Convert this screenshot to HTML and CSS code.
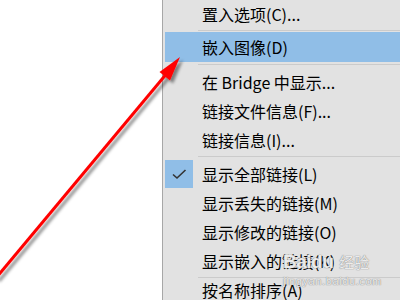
FILE: index.html
```html
<!DOCTYPE html>
<html>
<head>
<meta charset="utf-8">
<link rel="stylesheet" href="styles.css">
</head>
<body>
<div class="page">
  <div class="canvas"></div>
  <div class="menu">
    <div class="item first"><span class="check"></span><span class="label">置入选项(C)...</span></div>
    <div class="sep"></div>
    <div class="item active"><span class="check"></span><span class="label">嵌入图像(D)</span></div>
    <div class="sep"></div>
    <div class="item"><span class="check"></span><span class="label">在 Bridge 中显示...</span></div>
    <div class="item"><span class="check"></span><span class="label">链接文件信息(F)...</span></div>
    <div class="item"><span class="check"></span><span class="label">链接信息(I)...</span></div>
    <div class="sep"></div>
    <div class="item"><span class="check on"><svg width="28" height="28" viewBox="0 0 28 28"><path d="M8 14.5 L12 18 L20.5 10" fill="none" stroke="#333" stroke-width="1.6"/></svg></span><span class="label">显示全部链接(L)</span></div>
    <div class="item"><span class="check"></span><span class="label">显示丢失的链接(M)</span></div>
    <div class="item"><span class="check"></span><span class="label">显示修改的链接(O)</span></div>
    <div class="item"><span class="check"></span><span class="label">显示嵌入的链接(K)</span></div>
    <div class="sep"></div>
    <div class="item last"><span class="check"></span><span class="label">按名称排序(A)</span></div>
  </div>
  <svg class="arrow" width="400" height="300" viewBox="0 0 400 300">
    <defs>
      <filter id="sh" x="-20%" y="-20%" width="140%" height="140%">
        <feDropShadow dx="3" dy="3" stdDeviation="1.6" flood-color="#000" flood-opacity="0.45"/>
      </filter>
    </defs>
    <g filter="url(#sh)">
      <line x1="-4" y1="278" x2="168" y2="72" stroke="#ff0000" stroke-width="3"/>
      <polygon points="180,57 159.5,72 170,80.5" fill="#ff0000"/>
    </g>
  </svg>
  <div class="watermark">
    <div class="wm-top"><span class="wm-baidu">Bai<span class="paw">du</span></span><span class="wm-jy">经验</span></div>
    <div class="wm-url">jingyan.baidu.com</div>
  </div>
</div>
</body>
</html>
```
FILE: styles.css
```css
html, body {
  margin: 0;
  padding: 0;
  background: #ffffff;
}
.page {
  position: relative;
  width: 400px;
  height: 300px;
  overflow: hidden;
  display: flex;
  font-family: "Noto Sans CJK SC", "Noto Sans", sans-serif;
}
.canvas {
  width: 162px;
  flex: none;
  background: #ffffff;
}
.menu {
  flex: 1;
  background: #e2e2e2;
  border-left: 1px solid #a7a7a7;
  margin-top: -1px;
  display: flex;
  flex-direction: column;
}
.item {
  height: 29px;
  flex: none;
  display: flex;
  align-items: center;
  margin-left: 2px;
  font-size: 16px;
  color: #000;
  white-space: nowrap;
}
.item.active {
  background: #90bee7;
  height: 30px;
  margin-top: -1px;
}
.item.last {
  height: 20px;
  align-items: flex-start;
}
.item.last .check {
  height: 20px;
}
.check {
  width: 28px;
  height: 28px;
  flex: none;
  display: flex;
  align-items: center;
  justify-content: center;
}
.check.on {
  background: #90bee7;
}
.label {
  padding-left: 9px;
  line-height: 20px;
}
.sep {
  height: 1px;
  flex: none;
  margin: 2px 0 2px 35px;
  background: #cbcbcb;
}
.arrow {
  position: absolute;
  left: 0;
  top: 0;
  pointer-events: none;
}
.watermark {
  position: absolute;
  left: 283px;
  top: 252px;
  color: rgba(255, 255, 255, 0.85);
  text-shadow: 0 0 1px rgba(120, 120, 120, 0.8), 0 0 1px rgba(120, 120, 120, 0.8);
  font-family: "Liberation Sans", Arial, sans-serif;
}
.wm-top {
  display: flex;
  align-items: baseline;
  gap: 6px;
  line-height: 20px;
}
.wm-baidu {
  font-size: 19px;
  font-weight: bold;
  letter-spacing: -0.5px;
}
.wm-jy {
  font-family: "Noto Sans CJK SC", sans-serif;
  font-size: 15px;
}
.wm-url {
  font-size: 11px;
  line-height: 14px;
  letter-spacing: 0.6px;
  margin-top: 2px;
}
```
